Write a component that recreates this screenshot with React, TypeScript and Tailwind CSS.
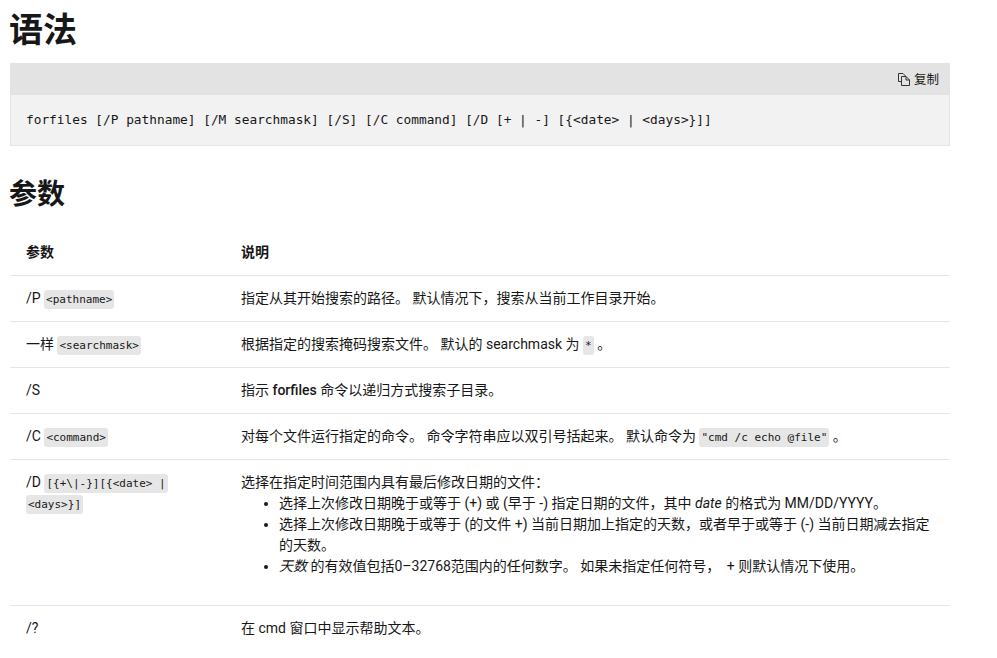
import React from 'react';

const cjkSans = '[font-family:"Roboto","Noto_Sans_CJK_SC",sans-serif]';

const Code = ({ children }: { children: React.ReactNode }) => (
  <code className='rounded-[3px] bg-[#e6e6e6] px-[2px] py-[3px] text-[11px] leading-none [font-family:"DejaVu_Sans_Mono","Noto_Sans_CJK_SC",monospace] [box-decoration-break:clone]'>
    {children}
  </code>
);

const CopyIcon = () => (
  <svg width="14" height="14" viewBox="0 0 14 14" fill="none" stroke="#333" strokeWidth="1">
    <path d="M4.5 9.5H1.5V1.5H6L8.5 4" />
    <path d="M4.5 4.5H9L12.5 8V13.5H4.5Z" />
    <path d="M9 4.5V8H12.5" />
  </svg>
);

const rows: { name: React.ReactNode; desc: React.ReactNode }[] = [
  {
    name: <>/P <Code>&lt;pathname&gt;</Code></>,
    desc: '指定从其开始搜索的路径。 默认情况下，搜索从当前工作目录开始。',
  },
  {
    name: <>一样 <Code>&lt;searchmask&gt;</Code></>,
    desc: <>根据指定的搜索掩码搜索文件。 默认的 searchmask 为 <Code>*</Code> 。</>,
  },
  {
    name: '/S',
    desc: <>指示 <span className="font-medium">forfiles</span> 命令以递归方式搜索子目录。</>,
  },
  {
    name: <>/C <Code>&lt;command&gt;</Code></>,
    desc: <>对每个文件运行指定的命令。 命令字符串应以双引号括起来。 默认命令为 <Code>"cmd /c echo @file"</Code> 。</>,
  },
  {
    name: <>/D <Code>[{'{'}+\|-{'}'}][{'{'}&lt;date&gt; | &lt;days&gt;{'}'}]</Code></>,
    desc: (
      <>
        选择在指定时间范围内具有最后修改日期的文件：
        <ul className="mb-4 list-disc pl-[38px]">
          <li>选择上次修改日期晚于或等于 (+) 或 (早于 -) 指定日期的文件，其中 <em>date</em> 的格式为 MM/DD/YYYY。</li>
          <li>选择上次修改日期晚于或等于 (的文件 +) 当前日期加上指定的天数，或者早于或等于 (-) 当前日期减去指定的天数。</li>
          <li><em>天数</em> 的有效值包括0–32768范围内的任何数字。 如果未指定任何符号， <span className="ml-[3px]">+</span> 则默认情况下使用。</li>
        </ul>
      </>
    ),
  },
  { name: '/?', desc: '在 cmd 窗口中显示帮助文本。' },
];

export default function App() {
  return (
    <div className={`min-h-screen overflow-hidden bg-white px-[10px] text-[14px] leading-[21px] text-[#171717] ${cjkSans}`}>
      <div className="w-[940px]">
        <h1 className="-ml-px h-[63px] pt-[8px] text-[34px] leading-[44px] font-bold">语法</h1>

        <div className="border border-[#e6e6e6] bg-[#f2f2f2]">
          <div className="-mx-px -mt-px flex h-[32px] items-center justify-end gap-[3px] bg-[#e3e3e3] pr-[11px] text-[12.5px]">
            <CopyIcon />
            <span>复制</span>
          </div>
          <pre className='h-[50px] pr-4 pl-[15px] pt-[14px] text-[12.8px] leading-[21px] [font-family:"DejaVu_Sans_Mono",monospace]'>
            forfiles [/P pathname] [/M searchmask] [/S] [/C command] [/D [+ | -] [{'{'}&lt;date&gt; | &lt;days&gt;{'}'}]]
          </pre>
        </div>

        <h2 className="-ml-px h-[84px] pt-[30px] text-[28px] leading-[38px] font-bold">参数</h2>

        <table className="w-full table-fixed border-collapse">
          <colgroup>
            <col className="w-[215px]" />
            <col />
          </colgroup>
          <thead>
            <tr className="border-b border-[#e6e6e6]">
              <th className="h-[45px] px-4 text-left align-middle font-bold">参数</th>
              <th className="h-[45px] px-4 text-left align-middle font-bold">说明</th>
            </tr>
          </thead>
          <tbody>
            {rows.map((row, i) => (
              <tr key={i} className="border-b border-[#e6e6e6] last:border-b-0">
                <td className="px-4 py-3 align-top">{row.name}</td>
                <td className="px-4 py-3 align-top">{row.desc}</td>
              </tr>
            ))}
          </tbody>
        </table>
      </div>
    </div>
  );
}
